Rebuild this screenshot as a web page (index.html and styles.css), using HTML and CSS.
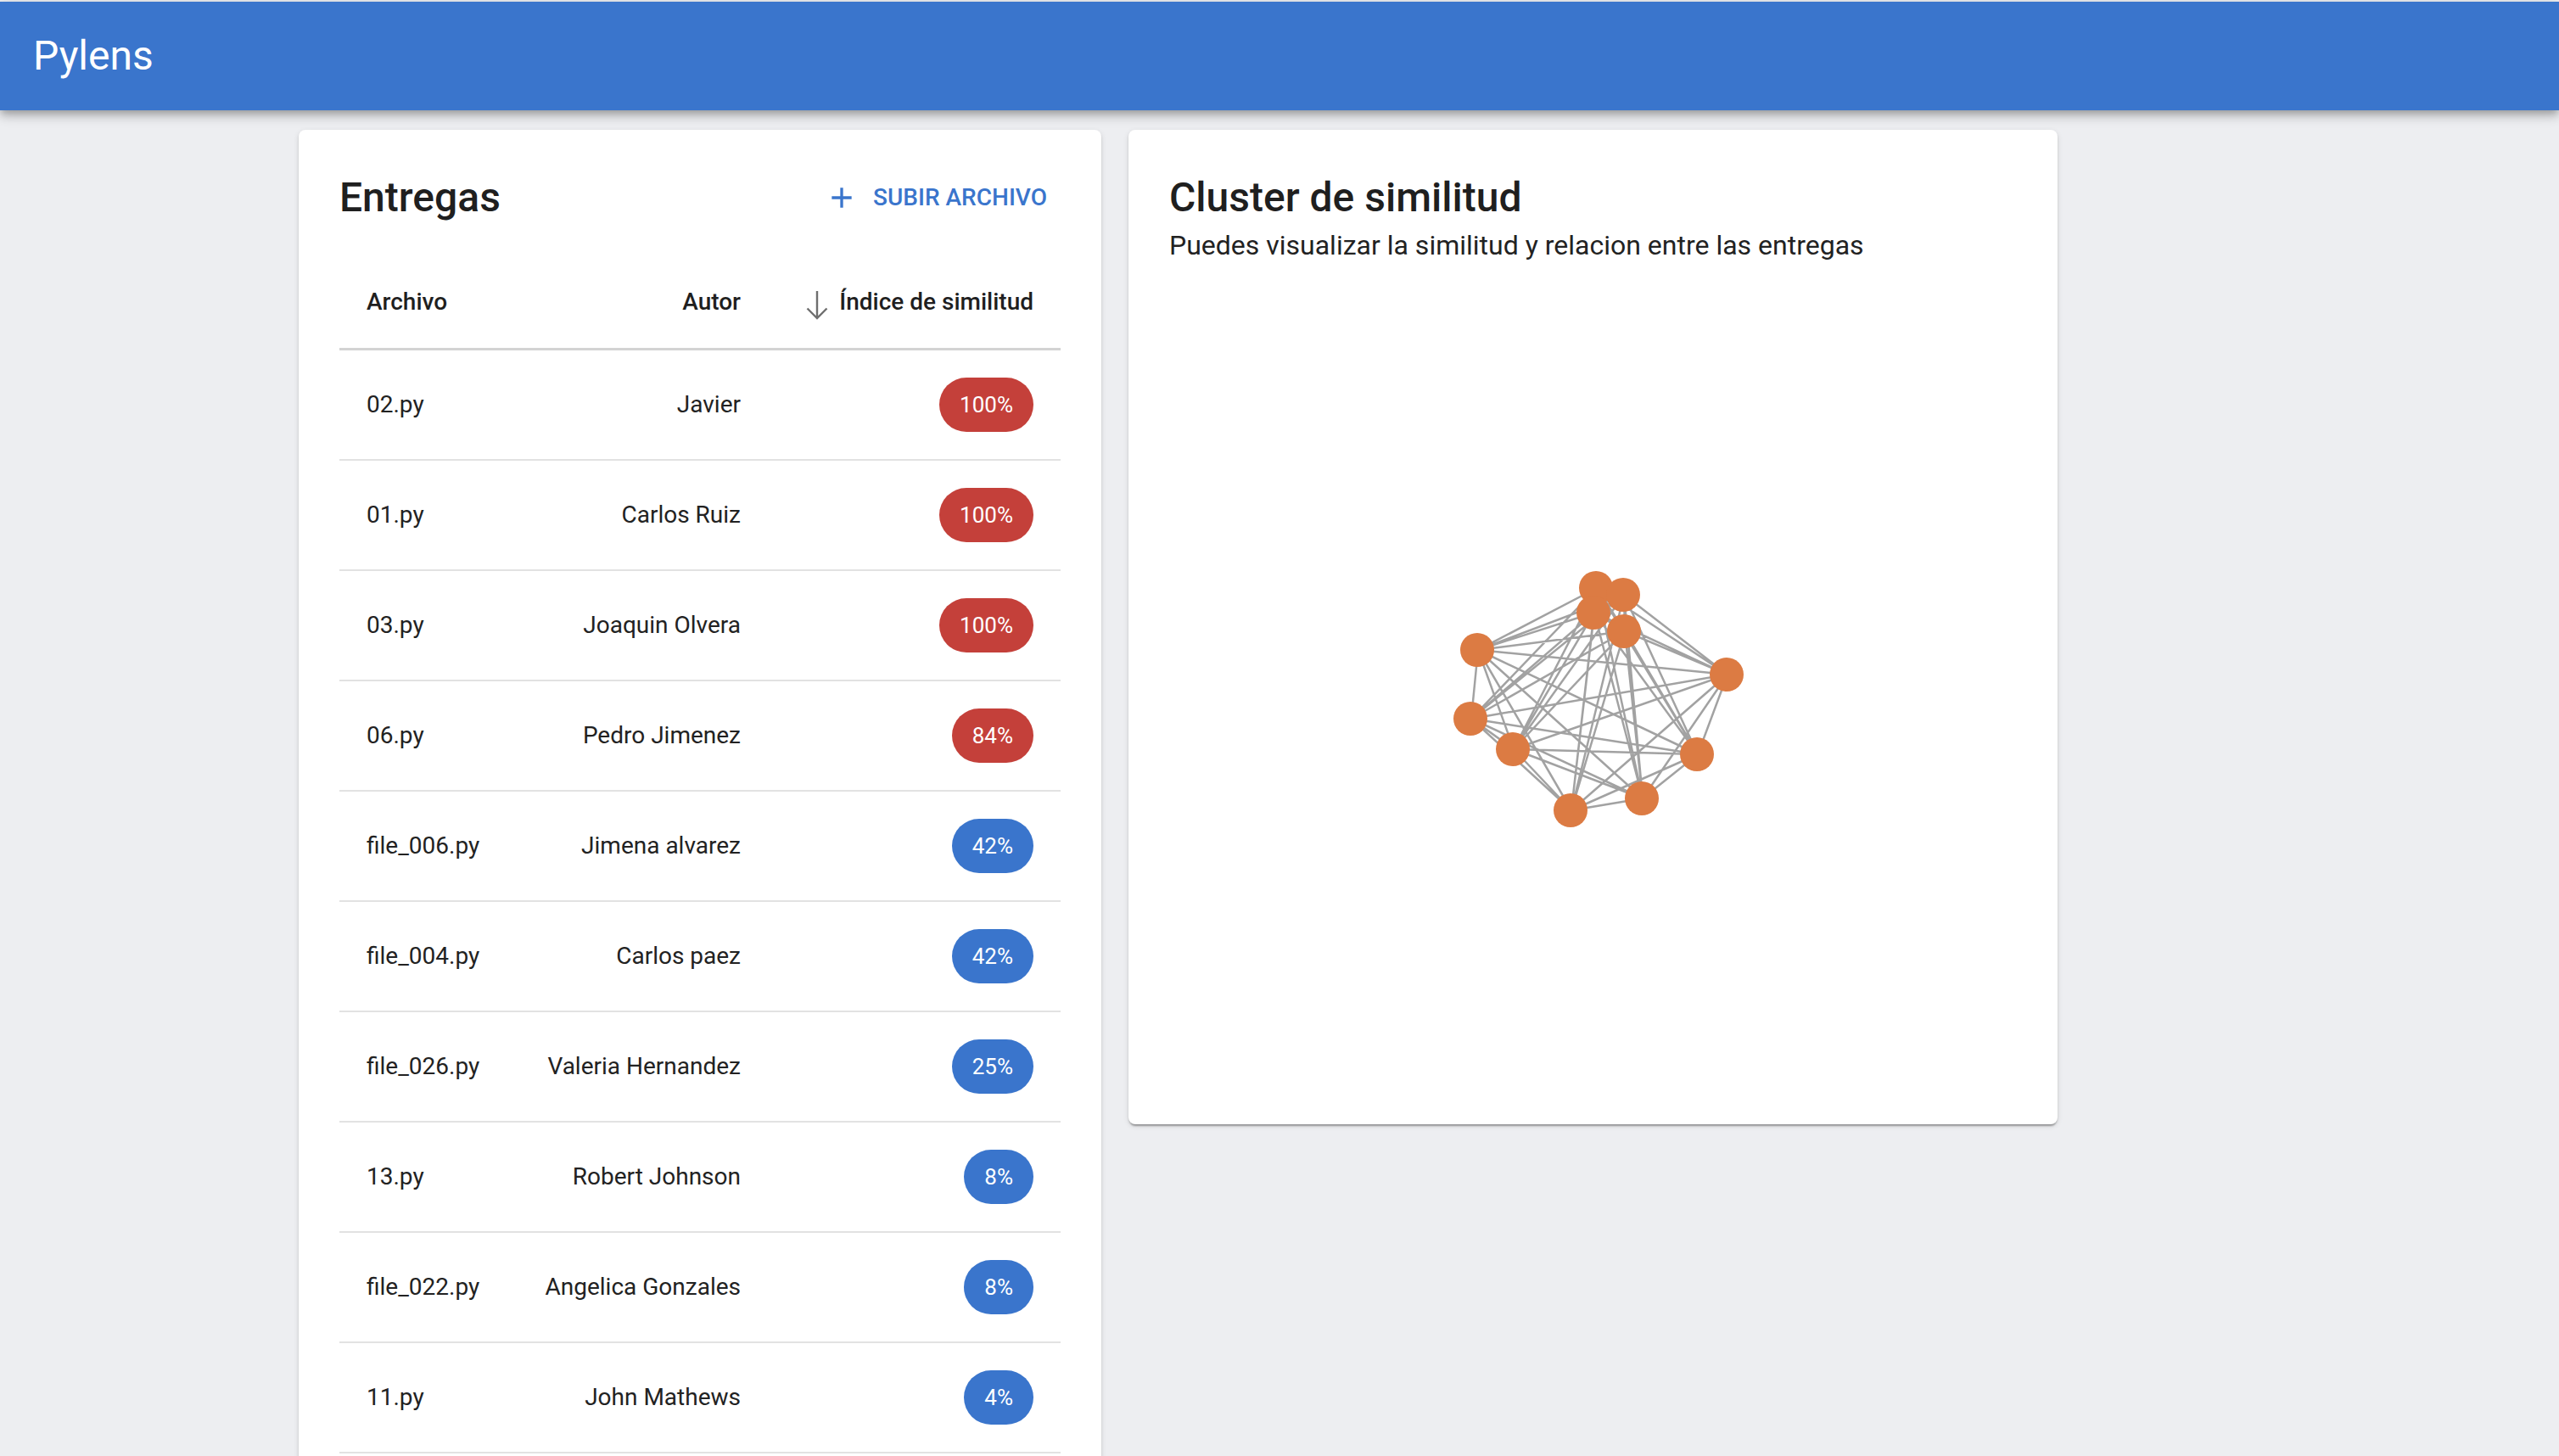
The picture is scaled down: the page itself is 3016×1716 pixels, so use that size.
FILE: index.html
```html
<!DOCTYPE html>
<html lang="es">
<head>
<meta charset="utf-8">
<title>Pylens</title>
<link rel="stylesheet" href="styles.css">
</head>
<body>
<header class="appbar">
  <div class="brand">Pylens</div>
</header>
<main class="layout">
  <section class="card card-list">
    <div class="card-head">
      <h2 class="card-title">Entregas</h2>
      <button class="btn-text" type="button">
        <svg class="btn-icon" viewBox="0 0 24 24" width="40" height="40"><path d="M19 13h-6v6h-2v-6H5v-2h6V5h2v6h6v2z" fill="currentColor"/></svg>
        <span>Subir archivo</span>
      </button>
    </div>
    <table class="tbl">
      <colgroup>
        <col class="c1"><col class="c2"><col class="c3">
      </colgroup>
      <thead>
        <tr>
          <th class="left">Archivo</th>
          <th class="right">Autor</th>
          <th class="right">
            <span class="sort">
              <svg class="sort-icon" viewBox="0 0 36 36" width="36" height="36"><path d="M18 5V37M6.5 25.5L18 37L29.5 25.5" fill="none" stroke="#6f6f6f" stroke-width="2.4"/></svg>
              <span>Índice de similitud</span>
            </span>
          </th>
        </tr>
      </thead>
      <tbody>
        <tr><td>02.py</td><td class="right">Javier</td><td class="right"><span class="chip chip-red">100%</span></td></tr>
        <tr><td>01.py</td><td class="right">Carlos Ruiz</td><td class="right"><span class="chip chip-red">100%</span></td></tr>
        <tr><td>03.py</td><td class="right">Joaquin Olvera</td><td class="right"><span class="chip chip-red">100%</span></td></tr>
        <tr><td>06.py</td><td class="right">Pedro Jimenez</td><td class="right"><span class="chip chip-red">84%</span></td></tr>
        <tr><td>file_006.py</td><td class="right">Jimena alvarez</td><td class="right"><span class="chip chip-blue">42%</span></td></tr>
        <tr><td>file_004.py</td><td class="right">Carlos paez</td><td class="right"><span class="chip chip-blue">42%</span></td></tr>
        <tr><td>file_026.py</td><td class="right">Valeria Hernandez</td><td class="right"><span class="chip chip-blue">25%</span></td></tr>
        <tr><td>13.py</td><td class="right">Robert Johnson</td><td class="right"><span class="chip chip-blue">8%</span></td></tr>
        <tr><td>file_022.py</td><td class="right">Angelica Gonzales</td><td class="right"><span class="chip chip-blue">8%</span></td></tr>
        <tr><td>11.py</td><td class="right">John Mathews</td><td class="right"><span class="chip chip-blue">4%</span></td></tr>
      </tbody>
    </table>
  </section>

  <section class="card card-graph">
    <h2 class="card-title">Cluster de similitud</h2>
    <p class="card-sub">Puedes visualizar la similitud y relacion entre las entregas</p>
    <svg class="graph" viewBox="0 2 999 966" width="999" height="966">
      <path class="edges" d="M504 384L536 392M504 384L501 413M504 384L537 435M504 384L364 457M504 384L658 486M504 384L356 538M504 384L406 574M504 384L623 580M504 384L558 632M504 384L474 646
M536 392L501 413M536 392L537 435M536 392L364 457M536 392L658 486M536 392L356 538M536 392L406 574M536 392L623 580M536 392L558 632M536 392L474 646
M501 413L537 435M501 413L364 457M501 413L658 486M501 413L356 538M501 413L406 574M501 413L623 580M501 413L558 632M501 413L474 646
M537 435L364 457M537 435L658 486M537 435L356 538M537 435L406 574M537 435L623 580M537 435L558 632M537 435L474 646
M364 457L658 486M364 457L356 538M364 457L406 574M364 457L623 580M364 457L558 632M364 457L474 646
M658 486L356 538M658 486L406 574M658 486L623 580M658 486L558 632M658 486L474 646
M356 538L406 574M356 538L623 580M356 538L558 632M356 538L474 646
M406 574L623 580M406 574L558 632M406 574L474 646
M623 580L558 632M623 580L474 646
M558 632L474 646"/>
      <g class="nodes">
        <circle cx="503" cy="384" r="20"/>
        <circle cx="535" cy="392" r="20"/>
        <circle cx="500" cy="413" r="20"/>
        <circle cx="536" cy="435" r="20"/>
        <circle cx="363" cy="457" r="20"/>
        <circle cx="657" cy="486" r="20"/>
        <circle cx="355" cy="538" r="20"/>
        <circle cx="405" cy="574" r="20"/>
        <circle cx="622" cy="580" r="20"/>
        <circle cx="557" cy="632" r="20"/>
        <circle cx="473" cy="646" r="20"/>
      </g>
    </svg>
  </section>
</main>
</body>
</html>
```

FILE: styles.css
```css
* { box-sizing: border-box; }

html, body {
  margin: 0;
  padding: 0;
}

body {
  background: #edeef1;
  font-family: Roboto, "Liberation Sans", Arial, sans-serif;
  color: rgba(0, 0, 0, 0.87);
  overflow: hidden;
}

.appbar {
  margin-top: 2px;
  height: 128px;
  background: #3a75cc;
  display: flex;
  align-items: center;
  padding-left: 39px;
  box-shadow: 0 4px 8px -2px rgba(0,0,0,0.2), 0 8px 10px 0 rgba(0,0,0,0.14), 0 2px 20px 0 rgba(0,0,0,0.12);
  position: relative;
  z-index: 2;
}

.brand {
  color: #fff;
  font-size: 48px;
  font-weight: 400;
  line-height: 64px;
}

.layout {
  display: flex;
  align-items: flex-start;
  gap: 32px;
  padding: 23px 0 0 352px;
}

.card {
  background: #fff;
  border-radius: 8px;
  padding: 48px;
  box-shadow: 0 4px 2px -2px rgba(0,0,0,0.2), 0 2px 2px 0 rgba(0,0,0,0.14), 0 2px 6px 0 rgba(0,0,0,0.12);
}

.card-list { width: 946px; }
.card-graph { width: 1095px; }

.card-head {
  display: flex;
  align-items: center;
  justify-content: space-between;
  height: 64px;
  margin-bottom: 33px;
}

.card-title {
  margin: 0;
  font-size: 48px;
  font-weight: 500;
  line-height: 64px;
  color: #1f1f1f;
}

.btn-text {
  display: flex;
  align-items: center;
  background: none;
  border: 0;
  padding: 0 0 0 8px;
  margin-right: 0;
  color: #3a75cc;
  font-family: inherit;
  font-size: 28px;
  font-weight: 500;
  letter-spacing: 0;
  text-transform: uppercase;
  line-height: 48px;
  cursor: pointer;
}

.btn-icon {
  margin-right: 17px;
  display: block;
}

.btn-text span { padding-right: 16px; }

.tbl {
  width: 100%;
  border-collapse: collapse;
  table-layout: fixed;
}

.c1 { width: 210px; }
.c2 { width: 295px; }
.c3 { width: 345px; }

.tbl th {
  font-size: 28px;
  font-weight: 500;
  line-height: 48px;
  height: 113px;
  padding: 33px 32px 29px;
  color: #1f1f1f;
  border-bottom: 3px solid #d3d3d3;
  white-space: nowrap;
  vertical-align: middle;
}

.tbl td {
  font-size: 28px;
  font-weight: 400;
  line-height: 40px;
  padding: 32px;
  color: #222;
  border-bottom: 2px solid #e2e2e2;
  vertical-align: middle;
  white-space: nowrap;
}

.left { text-align: left; }
.right { text-align: right; }

.sort {
  display: inline-flex;
  align-items: center;
  vertical-align: top;
  height: 48px;
}

.sort-icon {
  display: block;
  margin: 0 8px 0 4px;
  overflow: visible;
}

.chip {
  display: inline-flex;
  align-items: center;
  height: 64px;
  padding: 0 24px;
  border-radius: 32px;
  color: #fff;
  font-size: 26px;
  line-height: 1;
  vertical-align: middle;
}

.chip-red { background: #c4403a; }
.chip-blue { background: #3a75cc; }

.card-sub {
  margin: 2px 0 0 0;
  font-size: 32px;
  line-height: 44px;
  color: #222;
}

.graph {
  display: block;
}

.edges {
  fill: none;
  stroke: #a2a2a2;
  stroke-width: 2.5;
}

.nodes circle {
  fill: #dc7b43;
}
```
